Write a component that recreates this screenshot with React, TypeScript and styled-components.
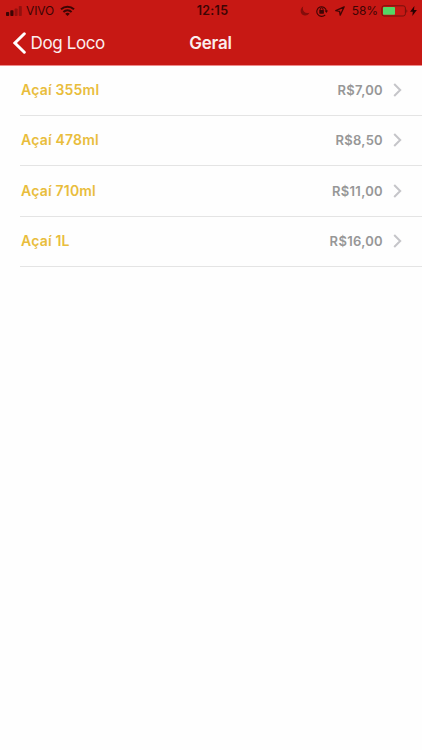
import React from "react";
import styled, { createGlobalStyle } from "styled-components";

const GlobalStyle = createGlobalStyle`
  * { box-sizing: border-box; }
  body { margin: 0; background: #fefefe; font-family: Inter, "Liberation Sans", sans-serif; }
`;

const Screen = styled.div`
  min-height: 750px;
  display: flex;
  flex-direction: column;
  background: #fefefe;
`;

const Header = styled.header`
  height: 66px;
  background: #c71814;
  background-clip: padding-box;
  border-bottom: 1px solid #ee8b8b;
`;

const ThreeColumns = styled.div`
  display: grid;
  grid-template-columns: 1fr auto 1fr;
  align-items: center;
`;

const StatusBar = styled(ThreeColumns)`
  height: 21px;
  padding: 0 5px 0 6px;
  color: #3d0504;
  font-size: 12px;
  line-height: 21px;
  svg { display: block; }
`;

const StatusGroup = styled.div<{ $end?: boolean }>`
  display: flex;
  align-items: center;
  justify-content: ${(p) => (p.$end ? "flex-end" : "flex-start")};
`;

const Carrier = styled.span`
  margin: 0 6px 0 4px;
  font-size: 12px;
  letter-spacing: -0.1px;
`;

const Clock = styled.time`
  padding-left: 2px;
  font-size: 12.5px;
  font-weight: 600;
  letter-spacing: 0.3px;
`;

const Percent = styled.span`
  margin: 0 3px 0 7px;
  font-size: 12px;
  letter-spacing: -0.1px;
`;

const NavBar = styled(ThreeColumns)`
  height: 44px;
  padding: 0 14px 0 13px;
  color: #fbeeee;
`;

const BackButton = styled.button`
  display: flex;
  align-items: center;
  gap: 4.5px;
  padding: 0;
  border: 0;
  background: none;
  color: inherit;
  font: 400 17px/22px Inter, sans-serif;
  letter-spacing: -0.38px;
  svg { display: block; }
`;

const Title = styled.h1`
  margin: 0;
  font-size: 17px;
  line-height: 22px;
  font-weight: 600;
  letter-spacing: -0.2px;
`;

const List = styled.ul`
  margin: 0;
  padding: 0 0 0 20px;
  list-style: none;
`;

const Row = styled.li`
  height: 50.2px;
  display: flex;
  align-items: center;
  padding: 0 20px 0.7px 1px;
  border-bottom: 1px solid #e4e4e4;
  svg { display: block; margin-left: 10px; }
`;

const ItemName = styled.span`
  flex: 1;
  color: #e9bd3c;
  font-size: 14px;
  line-height: 18px;
  font-weight: 600;
  letter-spacing: 0.2px;
`;

const Price = styled.span`
  color: #979797;
  font-size: 13px;
  line-height: 18px;
  font-weight: 600;
  letter-spacing: 0.3px;
`;

const SignalIcon = () => (
  <svg width="16" height="12" viewBox="0 0 16 12" fill="#3d0504">
    <rect x="0" y="7" width="3.2" height="4" rx="0.8" />
    <rect x="4.3" y="5.3" width="3.2" height="5.7" rx="0.8" />
    <rect x="8.6" y="3.4" width="3" height="7.6" rx="0.8" opacity="0.38" />
    <rect x="12.8" y="1" width="3" height="10" rx="0.8" opacity="0.38" />
  </svg>
);

const WifiIcon = () => (
  <svg width="15" height="12" viewBox="0 0 15 12" fill="none" stroke="#3d0504" strokeWidth="2">
    <path d="M1 4.3C4.8.8 10.2.8 14 4.3" />
    <path d="M3.4 7C5.8 4.8 9.2 4.8 11.6 7" />
    <path d="M7.5 11 5.2 8.7Q7.5 6.9 9.8 8.7Z" fill="#3d0504" stroke="none" />
  </svg>
);

const MoonIcon = () => (
  <svg width="10" height="10" viewBox="0 0 10 10" fill="#850d0b">
    <path d="M3.2.5C-.6 2.6-.3 9.3 4.8 9.5 7.1 9.6 8.9 8.5 9.5 6.8 4.7 8.1 1.8 4.8 3.2.5Z" />
  </svg>
);

const RotationLockIcon = () => (
  <svg width="12" height="12" viewBox="0 0 12 12" fill="none" stroke="#3d0504">
    <path d="M9.2 9.8A4.8 4.8 0 1 1 10.4 6" strokeWidth="1.1" />
    <path d="M8.6 5.5H12L10.4 7.9Z" fill="#3d0504" stroke="none" />
    <path d="M4.2 5.5V4.2a1.4 1.4 0 0 1 2.8 0v1.3" />
    <rect x="3.3" y="5" width="4.6" height="3.7" rx=".4" fill="#3d0504" stroke="none" />
  </svg>
);

const LocationIcon = () => (
  <svg width="10" height="10" viewBox="0 0 10 10" fill="none" stroke="#3d0504" strokeWidth="1.3" strokeLinejoin="round">
    <path d="M9.2.8.8 4.7 4.6 5.3 5.2 9.2Z" />
  </svg>
);

const BatteryIcon = () => (
  <svg width="27" height="12" viewBox="0 0 27 12">
    <rect x=".9" y=".8" width="23.5" height="10.2" rx="2.2" fill="none" stroke="#75110c" />
    <rect x="2" y="2" width="12" height="7.8" rx=".8" fill="#55d765" />
    <path d="M25.4 4.2Q27.4 6 25.4 7.8Z" fill="#75110c" />
  </svg>
);

const BoltSvg = styled.svg`
  margin-left: 2px;
`;

const BoltIcon = () => (
  <BoltSvg width="7" height="10" viewBox="0 0 7 10" fill="#260202">
    <path d="M4.4 0 .1 5.7H2.8L2.3 10 6.9 4.1H4Z" />
  </BoltSvg>
);

const BackIcon = () => (
  <svg width="13" height="22" viewBox="0 0 13 22" fill="none" stroke="#fff" strokeWidth="3" strokeLinecap="round">
    <path d="M11.3 1.8 1.9 11l9.4 9.2" />
  </svg>
);

const ChevronIcon = () => (
  <svg width="9" height="14" viewBox="0 0 9 14" fill="none" stroke="#c5c5c9" strokeWidth="2">
    <path d="m1.2 1 6 6-6 6" />
  </svg>
);

const items = [
  { name: "Açaí 355ml", price: "R$7,00" },
  { name: "Açaí 478ml", price: "R$8,50" },
  { name: "Açaí 710ml", price: "R$11,00" },
  { name: "Açaí 1L", price: "R$16,00" },
];

const Symbols = styled.div`
  display: flex;
  align-items: center;
  gap: 6.5px;
`;

export default function App() {
  return (
    <Screen>
      <GlobalStyle />
      <Header>
        <StatusBar>
          <StatusGroup>
            <SignalIcon />
            <Carrier>VIVO</Carrier>
            <WifiIcon />
          </StatusGroup>
          <Clock>12:15</Clock>
          <StatusGroup $end>
            <Symbols>
              <MoonIcon />
              <RotationLockIcon />
              <LocationIcon />
            </Symbols>
            <Percent>58%</Percent>
            <BatteryIcon />
            <BoltIcon />
          </StatusGroup>
        </StatusBar>
        <NavBar>
          <BackButton>
            <BackIcon />
            Dog Loco
          </BackButton>
          <Title>Geral</Title>
        </NavBar>
      </Header>
      <List>
        {items.map((item) => (
          <Row key={item.name}>
            <ItemName>{item.name}</ItemName>
            <Price>{item.price}</Price>
            <ChevronIcon />
          </Row>
        ))}
      </List>
    </Screen>
  );
}
